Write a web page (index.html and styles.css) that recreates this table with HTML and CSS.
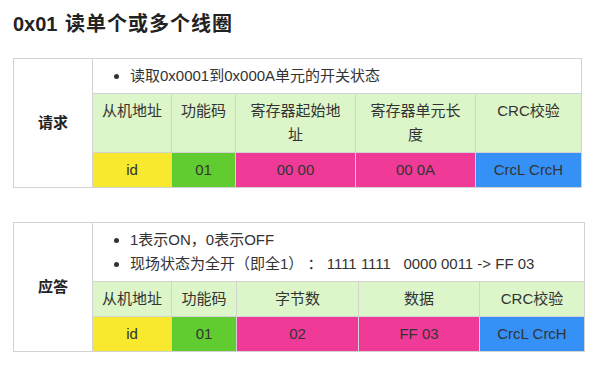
FILE: index.html
```html
<!DOCTYPE html>
<html lang="zh-CN">
<head>
<meta charset="utf-8">
<link rel="stylesheet" href="styles.css">
</head>
<body>
<h1 class="title">0x01 <span class="title-cjk">读单个或多个线圈</span></h1>
<table class="proto proto-req">
  <colgroup>
    <col class="c-label"><col class="c-a"><col class="c-b"><col class="c-c"><col class="c-d"><col class="c-e">
  </colgroup>
  <tr>
    <th class="label" rowspan="3">请求</th>
    <td class="note" colspan="5">
      <ul><li>读取0x0001到0x000A单元的开关状态</li></ul>
    </td>
  </tr>
  <tr class="head">
    <td>从机地址</td><td>功能码</td><td>寄存器起始地址</td><td>寄存器单元长度</td><td>CRC校验</td>
  </tr>
  <tr class="data">
    <td class="yellow">id</td><td class="green">01</td><td class="pink">00 00</td><td class="pink">00 0A</td><td class="blue">CrcL CrcH</td>
  </tr>
</table>
<table class="proto proto-res">
  <colgroup>
    <col class="c-label"><col class="c-a"><col class="c-b2"><col class="c-c2"><col class="c-d2"><col class="c-e2">
  </colgroup>
  <tr>
    <th class="label" rowspan="3">应答</th>
    <td class="note" colspan="5">
      <ul>
        <li>1表示ON，0表示OFF</li>
        <li>现场状态为全开（即全1） ： 1111 1111&nbsp;&nbsp;&nbsp;0000 0011 -&gt; FF 03</li>
      </ul>
    </td>
  </tr>
  <tr class="head">
    <td>从机地址</td><td>功能码</td><td>字节数</td><td>数据</td><td>CRC校验</td>
  </tr>
  <tr class="data">
    <td class="yellow">id</td><td class="green">01</td><td class="pink">02</td><td class="pink">FF 03</td><td class="blue">CrcL CrcH</td>
  </tr>
</table>
</body>
</html>
```
FILE: styles.css
```css
html, body {
  margin: 0;
  padding: 0;
  background: #ffffff;
}
body {
  padding: 0 13px;
  font-family: "Liberation Sans", "Noto Sans CJK SC", sans-serif;
  color: #333333;
  font-size: 15px;
}
.title {
  margin: 0;
  padding-top: 10px;
  height: 58px;
  box-sizing: border-box;
  font-size: 20px;
  line-height: 28px;
  font-weight: bold;
  color: #222222;
}
.title-cjk {
  letter-spacing: 1px;
  margin-left: 2px;
}
.proto {
  border-collapse: collapse;
  table-layout: fixed;
  margin: 0;
}
.proto-req { width: 568px; }
.proto-res { width: 571px; margin-top: 34px; }
.c-label { width: 79px; }
.c-a { width: 79px; }
.c-b { width: 64px; }
.c-b2 { width: 65px; }
.c-c { width: 120px; }
.c-d { width: 120px; }
.c-e { width: 106px; }
.c-c2 { width: 122px; }
.c-d2 { width: 121px; }
.c-e2 { width: 105px; }
.proto th, .proto td {
  border: 1px solid #d3d3d3;
  padding: 5px 8px;
  line-height: 24px;
  text-align: center;
  font-weight: normal;
}
.proto .head td {
  vertical-align: top;
  background: #dcf5c9;
}
.proto th.label {
  font-weight: bold;
  color: #222222;
}
.proto td.note {
  text-align: left;
  padding-left: 5px;
}
.note ul {
  margin: 0;
  padding-left: 32px;
}
.yellow { background: #f8e82e; }
.green { background: #60cc2f; }
.pink { background: #ef3a97; }
.blue { background: #3691f7; }
```
